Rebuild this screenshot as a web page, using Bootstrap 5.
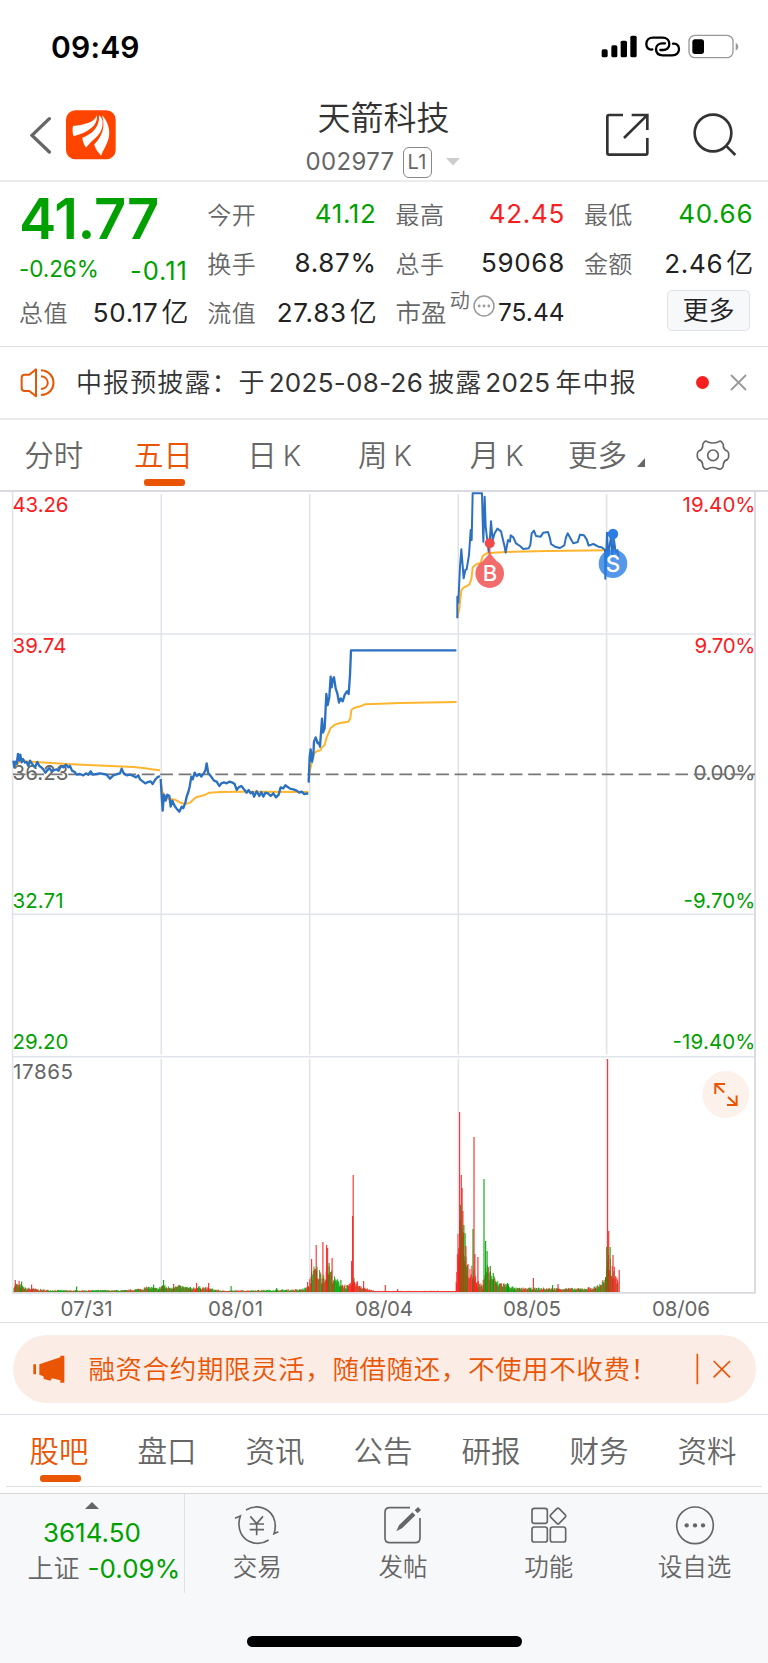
<!DOCTYPE html>
<html lang="zh-CN">
<head>
<meta charset="utf-8">
<meta name="viewport" content="width=device-width, initial-scale=1">
<title>天箭科技 002977</title>
<link href="https://cdn.jsdelivr.net/npm/bootstrap@5.3.0/dist/css/bootstrap.min.css" rel="stylesheet">
<style>
:root{--up:#f8201f;--down:#00a000;--brand:#ea5504;--ink:#222;--mute:#666}
body{font-family:Inter,"Noto Sans CJK SC DemiLight","Noto Sans CJK SC",sans-serif;color:var(--ink);background:#fff;line-height:1;width:768px;margin:0;overflow-x:hidden}
svg{display:block;flex:none}
.c-up{color:var(--up)}.c-down{color:var(--down)}.c-brand{color:var(--brand)}.c-mute{color:var(--mute)}
.statusbar{height:94px;padding:0 29px 0 51px}
.clock{font-size:30px;font-weight:600;color:#000;letter-spacing:.2px}
.topbar{height:88px;border-bottom:2px solid #ececec;display:grid;grid-template-columns:1fr auto 1fr;padding:0 31px 0 30px}
.stock-name{font-size:33px;line-height:40px;color:#333;font-weight:400;margin-top:4px}
.stock-code{font-size:24px;line-height:32px;letter-spacing:.35px;padding-right:2px}
.lv{width:29px;height:31px;border:1.5px solid #888;border-radius:6px;font-size:20px;color:#666}
.quote{height:165px;border-bottom:1px solid #dcdcdc;padding:11px 15px 0 19px;display:grid;grid-template-columns:169px 169px 169px 169px;column-gap:19.3px;grid-template-rows:49px 49px 49px}
.quote .lab{font-size:24px;color:var(--mute);letter-spacing:.4px;padding-top:3px}
.val{font-size:26px;letter-spacing:.7px;margin-right:-.4px}
.val .yi{font-size:27px;margin-left:3px;letter-spacing:0}
.big{font-size:56px;font-weight:600;line-height:53px;letter-spacing:-.3px}
.chg{font-size:22.5px;letter-spacing:-.1px}
.diff{font-size:25.5px;letter-spacing:1px}
.pe{font-size:25.5px;padding-top:9px}
.more-btn{width:83px;height:41px;margin:-1px 3px 0 0;font-size:26px;border:1.5px solid #dfe1ea;border-radius:5px;background:#f7f8fa;color:var(--ink);line-height:1;padding:0}
.notice{height:73px;border-bottom:2px solid #ececec;padding:0 21px 0 20px;font-size:26px;color:#333}
.notice .msg{letter-spacing:1.1px;margin-left:20px;white-space:nowrap}
.notice .num{letter-spacing:.3px;margin:0 5px 0 3px}
.dot{width:13px;height:13px;border-radius:50%;background:#f8201f}
.tabs{height:70px;font-size:29.5px;color:var(--mute)}
.tabs .tab{flex:1 1 0;display:flex;flex-direction:column;align-items:center;height:70px;padding-top:19px;line-height:32px}
.tabs .k{margin-left:6px;font-size:28.5px;font-weight:300}
.tab.on{color:var(--brand)}
.tab.on::after{content:"";width:41px;height:6.5px;border-radius:3px;background:var(--brand);margin-top:8px}
.tab>span{margin-left:-2px}
.tab>.week{margin-left:2px}
.tab>.month{margin-left:6px}
.tab>.period-more{margin-left:6px}
.chartbox{height:833px;border-bottom:1px solid #dcdcdc}
.chartbox text{font-family:Inter,sans-serif;font-size:20.5px}
.promo{height:92px;padding:12px 12.5px 0;border-bottom:1.5px solid #e2e3e8}
.pill{height:68px;border-radius:34px;background:#fcece6;padding:0 25px 0 20px;font-size:26.5px}
.pill .msg{letter-spacing:.6px;margin-left:24px;white-space:nowrap}
.subtabs{margin:0 6px 6px;width:756px;height:72px;border-bottom:1px solid #e0e0e0}
.subtabs .tab{padding-top:20px}
.bottombar{height:170px;border-top:1.5px solid #d5d6da;background:#f7f8fa}
.idx{width:185px;height:99px;border-right:1.5px solid #e0e1e6;font-size:26px}
.act{width:146px;font-size:24.5px;color:var(--mute);padding-right:1px}
.act svg{margin-top:9px}
.home-ind{width:275px;height:10.5px;border-radius:6px;background:#000;margin-top:43px}
</style>
</head>
<body>
<div class="statusbar d-flex justify-content-between align-items-center">
  <div class="clock">09:49</div>
  <svg width="138" height="26" viewBox="652 104 414 78">
    <g fill="#000"><rect x="654" y="150" width="18" height="24" rx="5"/><rect x="683" y="138" width="18" height="36" rx="5"/><rect x="711" y="124" width="19" height="50" rx="5"/><rect x="740" y="109" width="19" height="65" rx="5"/></g>
    <g fill="none" stroke="#000" stroke-width="7" stroke-linecap="round"><path d="M806 150 C795 153 788 145 788 134 C788 122 796 115 808 115 H836 C850 115 857 124 857 134 C857 146 848 152 838 152 H830"/><path d="M868 133 C879 131 886 139 886 149 C886 161 878 168 866 168 H838 C824 168 817 160 817 149 C817 138 826 132 836 132 H844"/></g>
    <rect x="916" y="108" width="132" height="67" rx="18" fill="none" stroke="#999" stroke-width="4"/><rect x="926" y="120" width="35" height="44" rx="8"/><path d="M1056 130 Q1064 134 1064 142 Q1064 150 1056 154 Z" fill="#999"/>
  </svg>
</div>

<header class="topbar">
  <div class="d-flex align-items-center pb-1">
    <svg width="87" height="53" viewBox="90 326 261 159"><path d="M148 355 L96 405 L148 455" fill="none" stroke="#666" stroke-width="10" stroke-linecap="round"/>
      <rect x="198" y="330" width="149" height="147" rx="28" fill="#ff4400"/>
      <g fill="#fff"><path d="M219 377 C250 374 283 368 291 345 C294 376 266 396 221 408 C217 398 217 386 219 377Z"/><path d="M247 412 C276 402 300 380 297 345 C310 352 312 377 300 397 C290 412 270 425 258 442 C252 432 248 424 247 412Z"/><path d="M306 345 C323 362 332 388 326 414 C321 434 309 450 303 466 C295 455 285 447 283 432 C304 410 318 384 306 345Z"/></g></svg>
  </div>
  <div class="text-center">
    <div class="stock-name">天箭科技</div>
    <div class="stock-code c-mute d-flex align-items-center justify-content-center mt-2"><span>002977</span><span class="lv d-inline-flex align-items-center justify-content-center ms-2">L1</span><svg style="margin-left:14px" width="14" height="8" viewBox="0 0 14 8"><path d="M0 0H14L7 7.5Z" fill="#ccc"/></svg></div>
  </div>
  <div class="d-flex align-items-center justify-content-end pb-1">
    <svg width="132" height="46" viewBox="664 336 396 138" fill="none" stroke="#333" stroke-width="8"><path d="M718 345 H676 Q671 345 671 350 V459 Q671 464 676 464 H786 Q791 464 791 459 V414"/><path d="M744 345 H791 V390 M721 414 L789 347"/><circle cx="988" cy="399" r="55"/><path d="M1029 439 L1055 465"/></svg>
  </div>
</header>

<section class="quote">
  <div class="c-down big">41.77</div>
  <div class="d-flex justify-content-between align-items-start pt-2"><span class="lab">今开</span><span class="val c-down">41.12</span></div>
  <div class="d-flex justify-content-between align-items-start pt-2"><span class="lab">最高</span><span class="val c-up">42.45</span></div>
  <div class="d-flex justify-content-between align-items-start pt-2"><span class="lab">最低</span><span class="val c-down">40.66</span></div>

  <div class="c-down d-flex justify-content-between pt-3"><span class="chg">-0.26%</span><span class="diff">-0.11</span></div>
  <div class="d-flex justify-content-between align-items-start pt-2"><span class="lab">换手</span><span class="val">8.87%</span></div>
  <div class="d-flex justify-content-between align-items-start pt-2"><span class="lab">总手</span><span class="val">59068</span></div>
  <div class="d-flex justify-content-between align-items-start pt-2"><span class="lab">金额</span><span class="val">2.46<span class="yi">亿</span></span></div>

  <div class="d-flex justify-content-between align-items-start pt-2"><span class="lab">总值</span><span class="val">50.17<span class="yi">亿</span></span></div>
  <div class="d-flex justify-content-between align-items-start pt-2"><span class="lab">流值</span><span class="val">27.83<span class="yi">亿</span></span></div>
  <div class="d-flex justify-content-between align-items-start"><span class="c-mute pe">市盈</span><span class="c-mute fs-5 lh-1">动</span><svg class="mt-1" width="22" height="22" viewBox="0 0 22 22"><circle cx="11" cy="11" r="10" fill="none" stroke="#999" stroke-width="1.5"/><g fill="#999"><circle cx="6.2" cy="11" r="1.4"/><circle cx="11" cy="11" r="1.4"/><circle cx="15.8" cy="11" r="1.4"/></g></svg><span class="pe" style="font-size:24.5px">75.44</span></div>
  <div class="d-flex justify-content-end align-items-start"><button class="more-btn">更多</button></div>
</section>

<section class="notice d-flex align-items-center">
  <svg width="36" height="30" viewBox="60 82 108 90" fill="none" stroke="#ea5504" stroke-width="6"><path d="M108 86 V167 L88 151 H74 Q65 151 65 142 V111 Q65 102 74 102 H88 Z" stroke-linejoin="round"/><path d="M123 89 C173 92 173 161 123 163 M123 107 C150 110 150 142 123 145"/></svg>
  <div class="msg">中报预披露：于<span class="num">2025-08-26</span>披露<span class="num">2025</span>年中报</div>
  <span class="dot ms-auto"></span>
  <svg style="margin-left:21px" width="17" height="17" viewBox="0 0 17 17" stroke="#999" stroke-width="1.8"><path d="M1 1L16 16M16 1L1 16"/></svg>
</section>

<nav class="tabs d-flex">
  <div class="tab"><span>分时</span></div>
  <div class="tab on"><span>五日</span></div>
  <div class="tab"><span class="ms-0">日<span class="k">K</span></span></div>
  <div class="tab"><span class="week">周<span class="k">K</span></span></div>
  <div class="tab"><span class="month">月<span class="k">K</span></span></div>
  <div class="tab"><span class="d-flex align-items-end period-more">更多<svg class="mb-1" style="margin-left:10px" width="8" height="9" viewBox="0 0 8 9"><path d="M8 0V9H0Z" fill="#666"/></svg></span></div>
  <div class="tab"><svg width="34" height="32" viewBox="935 295 102 96" fill="none" stroke="#666" stroke-width="5"><circle cx="986" cy="344" r="16"/><path d="M969 303 Q986 311 1003 303 Q1009 299 1014 306 Q1018 311 1017 318 Q1020 329 1029 331 Q1034 336 1033 344 Q1034 352 1029 357 Q1020 359 1017 370 Q1018 378 1013 382 Q1008 388 1001 384 Q986 377 971 384 Q964 388 959 382 Q954 378 955 370 Q952 359 943 357 Q938 352 939 344 Q938 336 943 331 Q952 329 955 318 Q954 311 958 306 Q963 299 969 303Z" stroke-linejoin="round"/></svg></div>
</nav>

<section class="chartbox">
<svg width="768" height="832" viewBox="0 490 768 832">
  <g stroke="#e0e3ea" stroke-width="1.6" fill="none">
    <path d="M12.6 491V1293M161.3 494V1054.5M309.7 494V1054.5M458.3 494V1054.5M606.6 494V1054.5M161.3 1059V1292M309.7 1059V1292M458.3 1059V1292M606.6 1059V1292"/>
    <path d="M12 634H755M12 914.3H755M12 1056.7H755"/>
    <path d="M0 491H768M12 1292.8H755.5M755 491V1293.5" stroke="#d9dae0" stroke-width="1.8"/>
  </g>
  <g id="vol"></g>
  <g fill="#f8201f"><text x="12.5" y="511.5" textLength="56">43.26</text><text x="12.5" y="652.6" textLength="54">39.74</text><text x="755.5" y="511.5" text-anchor="end" textLength="73">19.40%</text><text x="755.5" y="652.6" text-anchor="end" textLength="61">9.70%</text></g>
  <g fill="#666"><text x="12.5" y="780.3" textLength="56">36.23</text><text x="755.5" y="780.3" text-anchor="end" textLength="62">0.00%</text><text x="13" y="1078.7" textLength="60">17865</text>
  <g text-anchor="middle"><text x="86.5" y="1315.5" textLength="52">07/31</text><text x="235.5" y="1315.5" textLength="55">08/01</text><text x="384" y="1315.5" textLength="58">08/04</text><text x="532" y="1315.5" textLength="58">08/05</text><text x="681" y="1315.5" textLength="58">08/06</text></g></g>
  <g fill="#00a000"><text x="12.5" y="907.7" textLength="51">32.71</text><text x="12.5" y="1049.3" textLength="56">29.20</text><text x="755.5" y="907.7" text-anchor="end" textLength="72">-9.70%</text><text x="755.5" y="1049.3" text-anchor="end" textLength="83">-19.40%</text></g>
  <path d="M13 774.3H755" stroke="#777" stroke-width="1.7" stroke-dasharray="12.7 5.7"/>
  <g fill="none" stroke-linejoin="round">
    <g transform="translate(0 630) scale(.33333)">
      <path stroke="#ffb52e" stroke-width="6" d="M40 412L50 405L60 393L110 396L200 402L280 406L350 409L400 411L430 414L455 418L480 421M483 460L487 485L495 500L505 506L525 509L545 520L560 521L570 518L588 502L612 496L628 488L660 486L720 485L925 486"/>
      <path stroke="#2c70c0" stroke-width="7" d="M40 392L43 412L47 395L50 402L54 372L57 392L61 374L65 397L69 387L75 398L80 396L85 408L90 392L98 404L105 412L112 396L118 408L124 412L130 418L136 428L143 420L148 414L155 424L163 420L170 418L176 422L183 408L190 412L198 404L205 412L210 408L216 422L224 426L230 434L240 432L250 436L258 430L265 434L272 424L278 434L290 432L300 430L310 432L320 434L330 446L340 436L352 432L360 430L365 416L371 430L380 436L390 434L400 438L408 442L415 436L420 448L428 454L436 460L444 456L452 454L458 462L465 450L472 442L480 438M482 447L485 498L488 542L492 494L497 512L502 494L508 498L512 530L517 512L524 528L530 536L538 545L545 530L550 534L556 518L560 500L565 486L569 470L574 440L578 448L584 428L590 438L598 432L604 440L611 430L616 422L620 400L625 430L632 438L642 452L650 455L658 468L664 460L672 457L680 460L688 455L698 458L704 462L710 480L716 472L724 468L732 478L740 488L746 480L752 490L758 486L762 500L770 484L778 498L784 486L790 500L796 488L804 490L812 498L820 490L828 502L836 494L842 472L850 475L856 466L862 470L870 476L880 478L890 482L898 488L905 485L912 492L925 490"/>
    </g>
    <g transform="translate(300 480) scale(.33333)">
      <path stroke="#ffb52e" stroke-width="6" d="M26 900L30 870L36 846L42 820L50 814L62 810L65 803L74 795L80 772L92 744L105 734L120 729L145 725L151 715L154 690L162 684L180 679L195 673L240 671L300 669L470 666M472 412L478 385L484 330L492 322L508 314L514 298L518 262L530 252L542 249L548 228L560 220L580 218L640 215L740 213L917 211"/>
      <path stroke="#2c70c0" stroke-width="7" d="M26 908L29 830L32 808L36 845L40 825L42 785L47 772L53 790L57 788L60 800L66 716L69 758L74 745L79 642L83 675L88 650L92 590L95 622L98 600L102 592L107 625L112 640L117 668L122 655L128 664L134 645L141 634L146 642L150 585L153 511H469"/>
      <path stroke="#2c70c0" stroke-width="6" d="M472 415V350L475 368L480 260L484 208L487 245L491 295L496 270L500 268L507 225L512 150L515 180L518 40H546L548 120L550 185L554 50L557 140L560 165L566 215L569 190L573 124L578 180L584 160L592 146L603 154L609 180L613 196L617 218L624 180L630 185L632 166L640 172L648 190L660 198L670 207L686 205L691 195L695 160L702 152L708 168L722 170L730 158L744 156L750 175L753 192L765 200L780 204L793 196L798 172L803 160L812 176L820 190L833 186L840 164L852 166L860 178L866 197L880 192L895 200L905 202L915 210L916 296L921 158L925 232L930 190L934 165L937 230L942 180L947 218L952 210L956 232"/>
    </g>
  </g>
  <circle cx="489.7" cy="543.3" r="5" fill="#f04a4a"/><path d="M489.7 548V555" stroke="#f04a4a" stroke-width="1.5"/>
  <path d="M489.7 553L496.5 561A14.3 14.3 0 1 1 482.9 561Z" fill="#f26c6c"/>
  <path d="M613 534V545" stroke="#2b7de3" stroke-width="3"/><circle cx="613" cy="563.7" r="14.3" fill="#2b7de3" fill-opacity=".8"/><circle cx="613" cy="534" r="5.2" fill="#2b7de3"/>
  <g fill="#fff" font-weight="500" text-anchor="middle"><text x="490" y="581" style="font-size:22px">B</text><text x="613" y="571.5" style="font-size:22.5px">S</text></g>
  <circle cx="725.8" cy="1094.5" r="23.5" fill="#fdf1eb"/>
  <path d="M715.3 1094V1084H725M716 1084.7L724 1092.5M736.6 1095.5V1105H727M736 1104.5L728 1097" fill="none" stroke="#ea5504" stroke-width="2"/>
</svg>
</section>

<section class="promo">
  <div class="pill c-brand d-flex align-items-center">
    <svg width="32" height="28" viewBox="98 104 96 84" fill="#ea5504"><path d="M99 132h8v30h-8zM117 132L180 111V106H192V187H180V180L155 174L150 181L131 176L129 168L117 163Z"/></svg>
    <span class="msg">融资合约期限灵活，随借随还，不使用不收费！</span>
    <svg class="ms-auto" width="35" height="32" viewBox="935 98 105 96" stroke="#ea5504" stroke-width="5"><path d="M939 100V192M988 122L1037 171M1037 122L988 171"/></svg>
  </div>
</section>

<nav class="tabs subtabs d-flex"><div class="tab on"><span>股吧</span></div><div class="tab"><span>盘口</span></div><div class="tab"><span>资讯</span></div><div class="tab"><span>公告</span></div><div class="tab"><span>研报</span></div><div class="tab"><span>财务</span></div><div class="tab"><span>资料</span></div></nav>

<footer class="bottombar d-flex flex-column align-items-center">
  <div class="d-flex w-100">
    <div class="idx d-flex flex-column align-items-center pt-2">
      <svg width="14" height="7" viewBox="0 0 14 7"><path d="M0 7L7 0L14 7Z" fill="#666"/></svg>
      <div class="c-down" style="margin-top:11px">3614.50</div>
      <div class="d-flex align-items-center ps-4" style="margin-top:10px"><span class="c-mute">上证</span><span class="c-down ms-2">-0.09%</span></div>
    </div>
    <div class="act d-flex flex-column align-items-center"><svg width="48" height="44" viewBox="700 550 144 132" fill="none" stroke="#666" stroke-width="5"><path d="M739 571C770 553 806 563 821 592C829 610 829 624 823 642L836 636M807 661C775 682 738 668 724 641C716 623 716 606 722 589L706 596M752 590L771 612L790 590M771 612V647M750 613H793M750 630H793"/></svg><span class="mt-2">交易</span></div>
    <div class="act d-flex flex-column align-items-center"><svg width="48" height="44" viewBox="-12 550 144 132" fill="none" stroke="#666" stroke-width="5"><path d="M81 564H20Q6 564 6 578V655Q6 669 20 669H97Q111 669 111 655V595"/><path d="M40 635L48 617L88 578L97 587L57 626ZM95 572L105 562L114 571L104 581Z" fill="#666" stroke="none"/></svg><span class="mt-2">发帖</span></div>
    <div class="act d-flex flex-column align-items-center"><svg width="48" height="44" viewBox="424 550 144 132" fill="none" stroke="#666" stroke-width="5"><rect x="445" y="566" width="46" height="45" rx="7"/><rect x="445" y="622" width="46" height="45" rx="7"/><rect x="500" y="622" width="46" height="45" rx="7"/><rect x="505" y="571" width="36" height="36" rx="5" transform="rotate(45 523 589)"/></svg><span class="mt-2">功能</span></div>
    <div class="act d-flex flex-column align-items-center"><svg width="48" height="44" viewBox="861 550 144 132" fill="none" stroke="#666" stroke-width="5"><circle cx="933" cy="617" r="55"/><g fill="#666" stroke="none"><circle cx="908" cy="617" r="6.5"/><circle cx="933" cy="617" r="6.5"/><circle cx="957" cy="617" r="6.5"/></g></svg><span class="mt-2">设自选</span></div>
  </div>
  <div class="home-ind"></div>
</footer>

<script>
// Minute volume bars: an envelope of heights per trading period, then the isolated peaks
var base = 1292, R = '#f8201f', G = '#00a000', seed = 7, out = '';
function rnd(){ seed = (seed * 16807) % 2147483647; return seed / 2147483647; }
function bar(x, h, c, w){ out += '<rect x="' + x.toFixed(2) + '" y="' + (base - h).toFixed(1) + '" width="' + (w || 1) + '" height="' + h.toFixed(1) + '" fill="' + c + '" fill-opacity=".88"/>'; }
// [x, height, share of rising minutes]
var env = [[13.5,10,.4],[20,8,.4],[24,5,.5],[32,4,.6],[45,2.5,.3],[70,1.8,.5],[90,2.2,.2],[125,2,.4],[140,4,.3],[148,6,.3],[158,4,.5],[162,9,.3],[166,6,.2],[180,7,.3],[190,5,.6],[200,6,.6],[210,4,.4],[222,1.5,.7],[250,2,.3],[300,3,.2],[308,6,.7],[311,26,.6],[316,28,.6],[322,20,.5],[328,30,.5],[334,16,.3],[342,9,.3],[348,7,.6],[354,15,.8],[360,8,.8],[368,3,.9],[375,1.2,1],[455,1.2,1],[458,80,.6],[463,65,.5],[467,28,.7],[472,30,.9],[476,13,.9],[482,7,.8],[485,34,.5],[490,24,.3],[496,12,.4],[508,9,.3],[514,4.5,.5],[530,4.5,.6],[560,4.5,.6],[580,4,.6],[595,6,.4],[605,16,.5],[608,42,.5],[612,30,.5],[618,16,.5]];
for (var i = 0; i < env.length - 1; i++) {
  for (var a = env[i], b = env[i + 1], x = a[0]; x < b[0]; x += .62) {
    var t = (x - a[0]) / (b[0] - a[0]);
    bar(x, Math.max(1, (a[1] + (b[1] - a[1]) * t) * (.4 + .6 * rnd())), rnd() < a[2] ? R : G);
  }
}
[[14.7,12,R],[18.5,11,R],[21,10.5,G],[31,7.5,R],[76,5.5,G],[153,7.5,G],[163,12,G],[173,8,R],[196,9,R],[208,9,R],[230.5,6,G],[276,4,G],[307,10,R],[311,33,R],[315.6,47,R],[322.3,50,R],[326,47,R],[327,44,R],[328.5,29,G],[331.5,34,R],[340.3,12,G],[351,31,R],[352,76,R],[352.6,117,R],[363,11,R],[384.7,7,R],[397,3,R],[456,8,R],[458.2,44,R],[459,180,R],[460,87,G],[460.7,117,R],[461.5,104,R],[462.3,81,R],[463.3,67,G],[464.5,59,G],[465.3,46,R],[472.4,63,G],[473.4,155,R],[474.3,38,R],[477.3,35,R],[483.4,113,G],[485,51,G],[486.5,41,G],[489.7,26,G],[492.7,19,G],[507,9,G],[532.8,14,R],[552,7,G],[557.4,8,R],[606.1,45,G],[607,233,R],[608.1,61,R],[609.5,45,G],[612.4,37,R],[618.6,22,R]].forEach(function (p) { bar(p[0], p[1], p[2], 1.2); });
document.getElementById('vol').innerHTML = out;
</script>
<script src="https://cdn.jsdelivr.net/npm/bootstrap@5.3.0/dist/js/bootstrap.bundle.min.js"></script>
</body>
</html>
